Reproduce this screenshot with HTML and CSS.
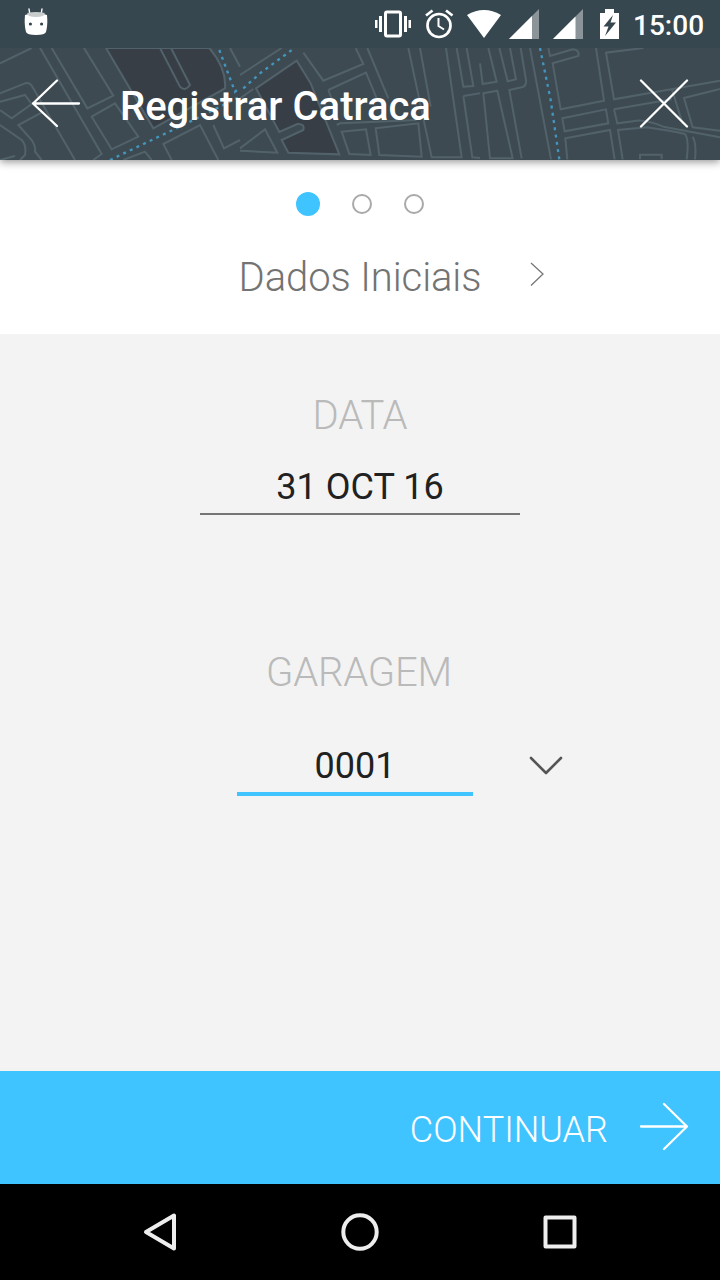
FILE: index.html
```html
<!DOCTYPE html>
<html lang="pt">
<head>
<meta charset="utf-8">
<title>Registrar Catraca</title>
<link rel="stylesheet" href="styles.css">
</head>
<body>
<div class="screen">
  <div class="status">
    <svg class="robot" width="24" height="28" viewBox="0 0 24 28"><path d="M6 7 5 1M17 7l1-6" stroke="#fff" stroke-width="1.4" stroke-linecap="round"/><path d="M1 7Q12 3 23 7Q24 17 22 24Q21 27 12 27Q3 27 2 24Q0 17 1 7Z" fill="#fff"/><path d="M3 5Q12 3 21 5L19 8Q12 10 5 8Z" fill="#c9cccd"/><circle cx="6.400" cy="16" r="1.600" fill="#37474f"/><circle cx="17.600" cy="16" r="1.600" fill="#37474f"/></svg>
    <svg class="tray" width="216" height="48" viewBox="0 0 216 48" fill="#fff">
      <rect x="17.500" y="12" width="15" height="24" rx="1.500" fill="none" stroke="#fff" stroke-width="3"/>
      <path d="M11 16h3v16h-3zM7 20h2.500v8H7zM36 16h3v16h-3zM40.500 20H43v8h-2.500z"/>
      <g fill="none" stroke="#fff"><circle cx="71" cy="25.500" r="11.500" stroke-width="2.700"/><path d="M70.500 18v8l5.500 3.500" stroke-width="2"/><path d="M58 15.500l6.500-5M84.500 15.500l-6.500-5" stroke-width="2.700"/></g>
      <path d="M99 15Q116 5 133 15L116 38Z"/>
      <path d="M171 9v30h-30z" opacity=".42"/><path d="M164 16v23H141z"/>
      <path d="M215 9v30h-30z" opacity=".42"/><path d="M207.500 16.500V39H185z"/>
    </svg>
    <svg class="battery" width="19" height="30" viewBox="0 0 19 30"><path d="M0 4h5V0h9v4h5v26H0z" fill="#fff"/><path d="M13 6 3.500 17.500H8.500L5 27 16 13.500h-5.500z" fill="#37474f"/></svg>
    <span class="clock">15:00</span>
  </div>
  <header class="bar">
    <svg class="map" width="720" height="112" viewBox="0 0 720 112">
      <g transform="translate(0 -48) scale(.33333)" class="street">
        <path class="park" d="M318 144 460 385 675 265Q680 205 628 144Z"/>
        <path d="M0 190 95 144M120 144 305 462 280 480M155 144 262 325 340 287 252 144M0 280 75 250Q90 246 98 262L225 480M0 305 75 285 95 312 35 355 0 330M0 375 65 420Q80 435 75 465L60 480M0 480 45 468M130 335 55 375 95 420Q108 440 105 455L125 480M275 350 345 310 415 410 335 448ZM480 144 540 260Q555 276 570 255L513 144M370 480 435 455 455 480M515 480 490 432 600 375 655 480M640 375 672 445 720 420M690 144 720 200"/>
        <path class="route" d="M330 480 560 370 720 290M658 150 705 275 720 262"/>
      </g>
      <g transform="translate(240 -8) scale(.33333)" class="street">
        <path class="park" d="M48 145 170 62 212 130 298 343 145 338 125 300 190 270Q195 250 172 252L118 276Z"/>
        <path d="M0 105 125 24M190 38 250 122 370 72 347 24M382 24 445 175M265 150 378 98 410 175M265 150 280 190M0 175 40 147M505 24 575 352 665 352 618 24M540 24 572 200M650 24 670 140 700 138 680 24M670 168 697 352 720 354M670 168 720 160M290 255 300 250 530 240M305 275 378 268 392 345 328 342ZM407 265 535 250 545 350 418 345ZM0 325 75 268 112 338 0 332"/>
        <path class="route" d="M10 145 60 100 158 28"/>
      </g>
      <g transform="translate(480 -8) scale(.33333)" class="street">
        <path d="M0 70 8 132 50 125 25 24M58 24 83 124 108 118 90 24M122 24 138 120Q140 138 125 142L88 150 125 355M10 160 52 152 98 355 30 355ZM150 24 213 358M205 24 210 48 278 28Q300 30 295 48L218 70 242 208 372 182 348 24M720 122 402 178 378 38 490 24M247 235 378 208 385 250 254 274ZM262 358 256 295 390 270 404 358M402 208 575 178M402 208 412 250 470 242Q500 240 550 260L720 292M428 358 414 270 500 262Q570 272 615 282Q628 300 620 358M645 358Q650 310 638 290M575 145 608 252M720 147 612 174 638 262 720 272M480 358v-14h65v14"/>
        <path class="route" d="M180 24 212 180 238 358"/>
      </g>
    </svg>
    <svg class="icon" width="50" height="50" viewBox="0 0 50 50"><path d="M48 25.500H2M26 2.500 2 25.500 26 48"/></svg>
    <h1>Registrar Catraca</h1>
    <svg class="icon" width="50" height="50" viewBox="0 0 50 50"><path d="M2 2.500 48 48.500M48 2.500 2 48.500"/></svg>
  </header>
  <section class="step">
    <div class="dots"><i class="dot on"></i><i class="dot"></i><i class="dot"></i></div>
    <div class="steprow"><span class="label">Dados Iniciais</span><svg class="next" width="16" height="26" viewBox="0 0 16 26"><path d="M2 2 14 13 2 24.500"/></svg></div>
  </section>
  <main class="form">
    <div class="caption">DATA</div>
    <div class="field date">31 OCT 16</div>
    <div class="caption second">GARAGEM</div>
    <div class="garage"><div class="field number">0001</div><svg width="34" height="20" viewBox="0 0 34 20"><path d="M2 2 17 17 32 2"/></svg></div>
  </main>
  <footer class="continue"><span>CONTINUAR</span><svg class="icon" width="50" height="50" viewBox="0 0 50 50"><path d="M2 24.500h46M25 2l23 22.500L25 47"/></svg></footer>
  <nav class="nav">
    <svg width="40" height="40" viewBox="0 0 40 40"><path d="M34 3.500v33L6 20Z"/></svg>
    <svg width="40" height="40" viewBox="0 0 40 40"><circle cx="20" cy="20" r="16.700"/></svg>
    <svg width="40" height="40" viewBox="0 0 40 40"><rect x="5.500" y="5.500" width="29" height="29"/></svg>
  </nav>
</div>
</body>
</html>
```
FILE: styles.css
```css
* { box-sizing: border-box; }
body { margin: 0; font-family: Roboto, "Noto Sans", sans-serif; }
svg { display: block; flex: none; }
.screen { width: 720px; height: 1280px; display: flex; flex-direction: column; background: #f3f3f3; overflow: hidden; }
.status { position: relative; z-index: 2; height: 48px; flex: none; background: #37474f; display: flex; align-items: center; color: #fff; padding: 0 15px 0 24px; }
.robot { margin-bottom: 4px; }
.tray { margin-left: 320px; }
.battery { margin: 0 14px 0 16px; }
.clock { font-size: 28px; line-height: 48px; font-weight: 500; padding-top: 3px; }
.bar { position: relative; z-index: 1; height: 112px; flex: none; background: #3e4a51; display: flex; align-items: center; padding: 0 31px 2px; box-shadow: 0 2px 8px rgba(0, 0, 0, .42); }
.map { position: absolute; inset: 0; }
.street { fill: none; stroke: #52626b; stroke-width: 6; }
.street .park { fill: #373e46; }
.street .route { stroke: #4296bd; stroke-width: 7; stroke-dasharray: 9 13; }
.icon { position: relative; fill: none; stroke: #fff; stroke-width: 2.3; stroke-linecap: round; stroke-linejoin: round; }
h1 { position: relative; flex: 1; margin: 7px 0 0 39px; font-size: 40px; line-height: 48px; font-weight: 500; color: #fff; }
.step { height: 174px; flex: none; background: #fff; padding-top: 32px; }
.dots { display: flex; justify-content: center; align-items: center; gap: 32px; height: 24px; }
.dot { width: 20px; height: 20px; border: 2px solid #a9a9a9; border-radius: 50%; }
.dot.on { width: 24px; height: 24px; border: 0; background: #40c4ff; }
.steprow { display: grid; grid-template-columns: 1fr auto 1fr; align-items: center; margin-top: 38px; }
.label { grid-column: 2; font-size: 40px; line-height: 48px; font-weight: 300; color: #737373; letter-spacing: -0.1px; }
.next { margin: 0 0 8px 48px; fill: none; stroke: #777; stroke-width: 1.3; }
.form { flex: 1; display: flex; flex-direction: column; align-items: center; padding-top: 58px; }
.caption { font-size: 40px; line-height: 48px; font-weight: 300; color: #bababa; letter-spacing: -0.2px; }
.field { font-size: 36px; line-height: 42px; color: #212121; text-align: center; }
.date { width: 320px; margin-top: 26px; padding-bottom: 5px; border-bottom: 2px solid #757575; }
.second { margin: 134px 2px 0 0; }
.garage { display: flex; gap: 56px; margin: 48px 0 0 80px; }
.garage svg { margin-top: 11px; fill: none; stroke: #555; stroke-width: 2.6; stroke-linecap: round; stroke-linejoin: round; }
.number { width: 236px; padding-bottom: 5px; border-bottom: 4px solid #40c4ff; }
.continue { height: 113px; flex: none; background: #40c4ff; color: #fff; display: flex; align-items: center; justify-content: flex-end; gap: 31px; padding: 0 31px 2px; font-size: 36px; font-weight: 300; }
.continue span { padding-top: 7px; }
.nav { height: 96px; flex: none; background: #000; display: flex; justify-content: center; align-items: center; gap: 160px; fill: none; stroke: #eee; stroke-width: 4; stroke-linejoin: round; }
```
